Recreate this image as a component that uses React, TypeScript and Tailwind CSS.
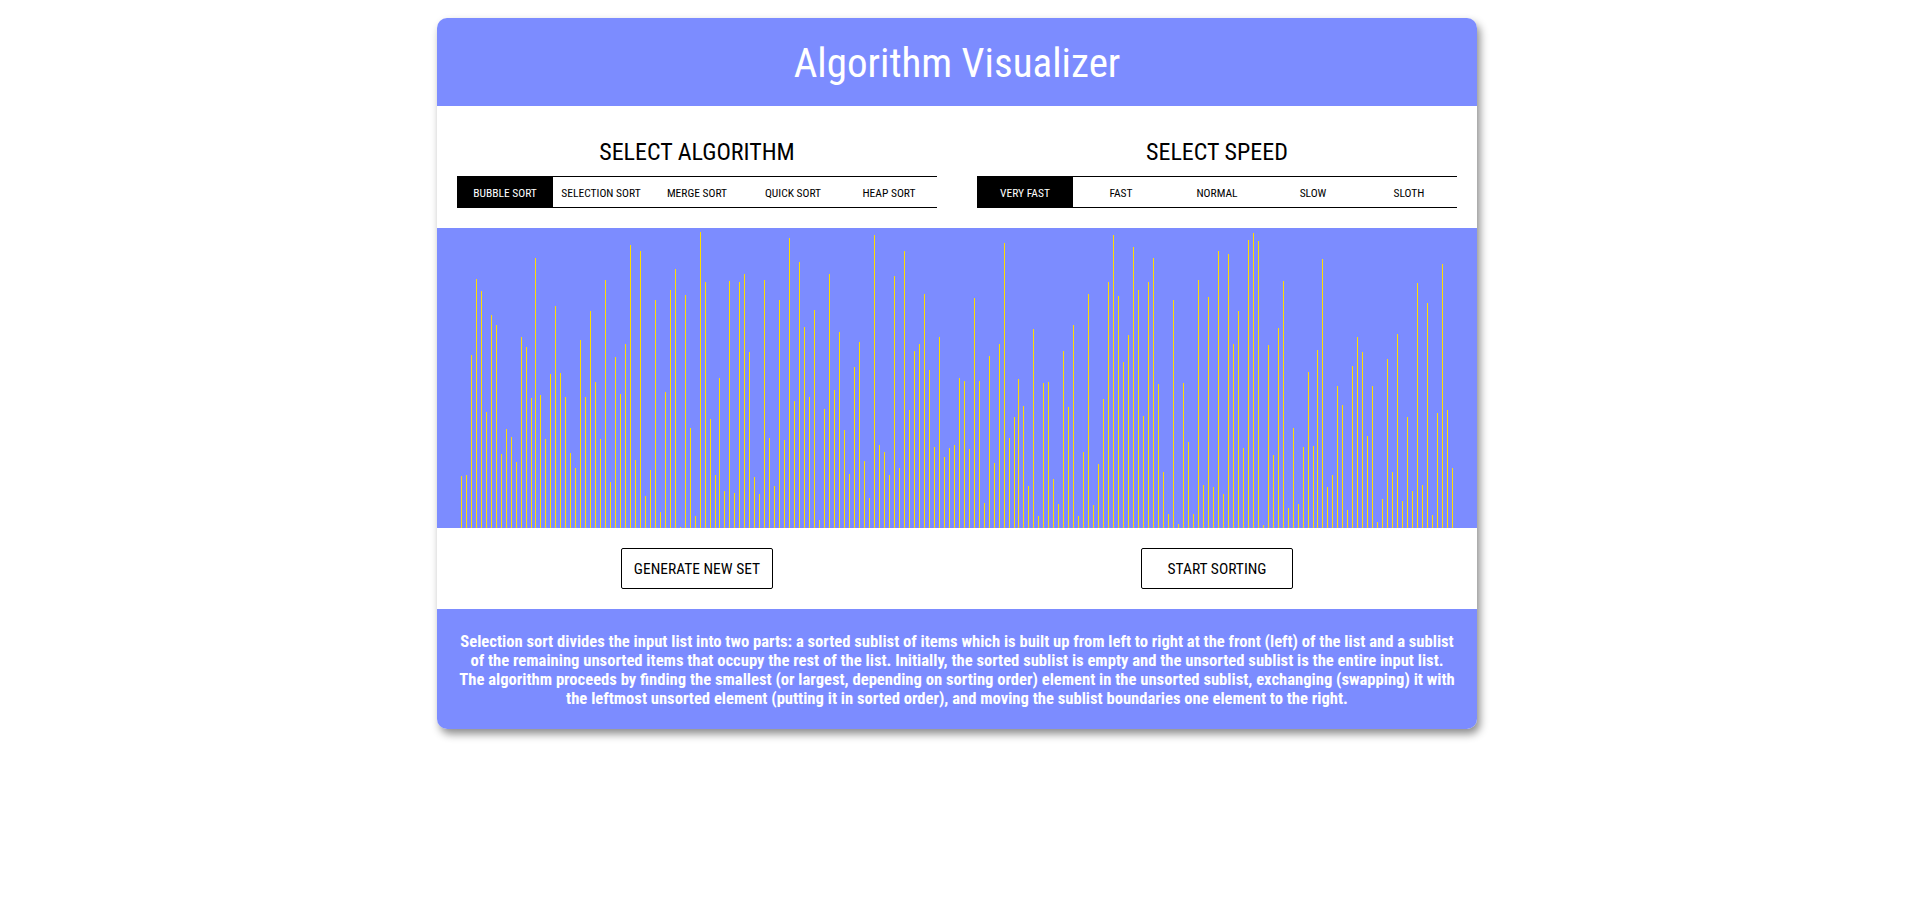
const heights = [
753,750,390,162,198,561,270,300,687,612,636,711,336,366,519,99,510,642,447,243,444,516,684,729,345,516,258,471,642,165,771,396,507,357,60,705,78,813,735,225,861,501,195,132,906,210,609,873,21,171,
582,750,459,798,168,804,171,147,381,756,807,165,639,783,225,645,39,528,111,306,516,255,885,552,147,495,321,615,747,426,351,708,819,30,660,681,750,153,729,78,555,378,357,207,435,666,336,696,669,660,459,468,672,
219,468,834,393,714,357,54,639,575,462,543,783,312,873,474,471,762,837,378,546,300,873,681,207,840,717,522,171,30,213,411,330,66,195,573,171,99,477,741,867,225,897,474,651,867,165,780,216,786,78,807,87,
357,258,669,45,24,48,900,360,690,309,168,849,609,837,666,441,663,375,102,786,750,483,540,855,423,336,381,633,483,891,822,402,741,327,828,576,798,174,780,234,870,564,117,555,729,
].map((t) => Math.round((909 - t) / 3));

const shortGaps = [14, 51, 111, 171];

function Tabs({ items }: { items: string[] }) {
  return (
    <div className="flex w-[480px] border-y border-black">
      {items.map((item, i) => (
        <div
          key={item}
          className={
            i === 0
              ? "flex h-[30px] w-24 items-center justify-center bg-black pt-[3px] text-[11.5px] text-white"
              : "flex h-[30px] w-24 items-center justify-center pt-[3px] text-[11.5px] text-black"
          }
        >
          {item}
        </div>
      ))}
    </div>
  );
}

function Selector({ title, items }: { title: string; items: string[] }) {
  return (
    <div className="flex w-[480px] flex-col items-center">
      <div className="mb-[9px] text-[24px] leading-[30px] text-black">{title}</div>
      <Tabs items={items} />
    </div>
  );
}

function ActionButton({ label }: { label: string }) {
  return (
    <div className="flex w-[480px] justify-center">
      <div className="flex h-[41px] w-[152px] items-center justify-center rounded-[2px] border border-black pt-[3px] text-[15.5px] text-black">
        {label}
      </div>
    </div>
  );
}

export default function App() {
  return (
    <div className="min-h-[919px] bg-white pt-[18px] font-[Roboto,sans-serif] [font-stretch:75%]">
      <div className="ml-[437px] w-[1040px] overflow-hidden rounded-[10px] bg-white shadow-[3px_5px_8px_rgba(0,0,0,0.45)]">
        <div className="flex h-[88px] items-center justify-center bg-[#7c8cff] pt-1 text-[41px] font-[450] text-white">
          Algorithm Visualizer
        </div>
        <div className="flex h-[122px] items-end justify-between px-5 pb-5">
          <Selector title="SELECT ALGORITHM" items={["BUBBLE SORT", "SELECTION SORT", "MERGE SORT", "QUICK SORT", "HEAP SORT"]} />
          <Selector title="SELECT SPEED" items={["VERY FAST", "FAST", "NORMAL", "SLOW", "SLOTH"]} />
        </div>
        <div className="flex h-[300px] items-end bg-[#7c8cff] px-6">
          {heights.map((h, i) => (
            <div
              key={i}
              className={
                i === 199
                  ? "w-px shrink-0 bg-[#ffdd00]"
                  : shortGaps.includes(i)
                    ? "mr-[3px] w-px shrink-0 bg-[#ffdd00]"
                    : "mr-[4px] w-px shrink-0 bg-[#ffdd00]"
              }
              style={{ height: h }}
            />
          ))}
        </div>
        <div className="flex h-[81px] items-center justify-between px-5">
          <ActionButton label="GENERATE NEW SET" />
          <ActionButton label="START SORTING" />
        </div>
        <div className="flex h-[120px] items-center justify-center bg-[#7c8cff] pt-0.5 text-center text-[16.6px] font-bold leading-[19px] text-white">
          <p className="whitespace-nowrap">
            Selection sort divides the input list into two parts: a sorted sublist of items which is built up from left to right at the front (left) of the list and a sublist
            <br />
            of the remaining unsorted items that occupy the rest of the list. Initially, the sorted sublist is empty and the unsorted sublist is the entire input list.
            <br />
            The algorithm proceeds by finding the smallest (or largest, depending on sorting order) element in the unsorted sublist, exchanging (swapping) it with
            <br />
            the leftmost unsorted element (putting it in sorted order), and moving the sublist boundaries one element to the right.
          </p>
        </div>
      </div>
    </div>
  );
}
